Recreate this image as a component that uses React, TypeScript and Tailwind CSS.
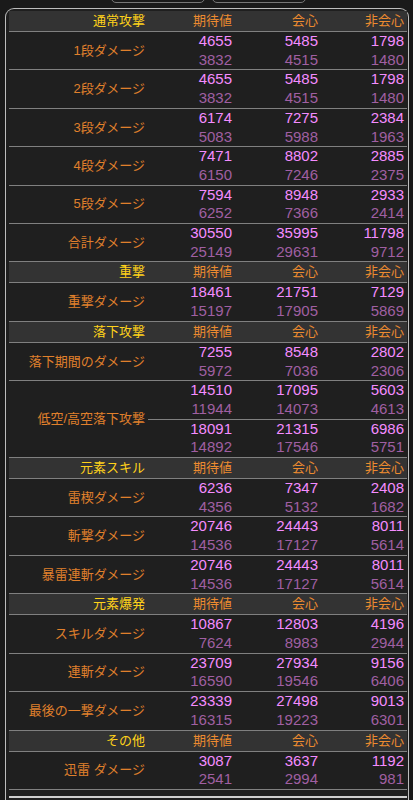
import React from "react"

type Row = { label?: string; span?: number; top: string[]; bottom: string[]; midSplit?: boolean }
type Section = { title: string; rows: Row[] }

const sections: Section[] = [
  {
    title: "通常攻撃",
    rows: [
      { label: "1段ダメージ", top: ["4655", "5485", "1798"], bottom: ["3832", "4515", "1480"] },
      { label: "2段ダメージ", top: ["4655", "5485", "1798"], bottom: ["3832", "4515", "1480"] },
      { label: "3段ダメージ", top: ["6174", "7275", "2384"], bottom: ["5083", "5988", "1963"] },
      { label: "4段ダメージ", top: ["7471", "8802", "2885"], bottom: ["6150", "7246", "2375"] },
      { label: "5段ダメージ", top: ["7594", "8948", "2933"], bottom: ["6252", "7366", "2414"] },
      { label: "合計ダメージ", top: ["30550", "35995", "11798"], bottom: ["25149", "29631", "9712"] },
    ],
  },
  {
    title: "重撃",
    rows: [{ label: "重撃ダメージ", top: ["18461", "21751", "7129"], bottom: ["15197", "17905", "5869"] }],
  },
  {
    title: "落下攻撃",
    rows: [
      { label: "落下期間のダメージ", top: ["7255", "8548", "2802"], bottom: ["5972", "7036", "2306"] },
      { label: "低空/高空落下攻撃", span: 2, top: ["14510", "17095", "5603"], bottom: ["11944", "14073", "4613"] },
      { top: ["18091", "21315", "6986"], bottom: ["14892", "17546", "5751"] },
    ],
  },
  {
    title: "元素スキル",
    rows: [
      { label: "雷楔ダメージ", top: ["6236", "7347", "2408"], bottom: ["4356", "5132", "1682"] },
      { label: "斬撃ダメージ", top: ["20746", "24443", "8011"], bottom: ["14536", "17127", "5614"] },
      { label: "暴雷連斬ダメージ", top: ["20746", "24443", "8011"], bottom: ["14536", "17127", "5614"] },
    ],
  },
  {
    title: "元素爆発",
    rows: [
      { label: "スキルダメージ", top: ["10867", "12803", "4196"], bottom: ["7624", "8983", "2944"] },
      { label: "連斬ダメージ", top: ["23709", "27934", "9156"], bottom: ["16590", "19546", "6406"] },
      { label: "最後の一撃ダメージ", top: ["23339", "27498", "9013"], bottom: ["16315", "19223", "6301"] },
    ],
  },
  {
    title: "その他",
    rows: [{ label: "迅雷 ダメージ", top: ["3087", "3637", "1192"], bottom: ["2541", "2994", "981"] }],
  },
]

const jp = "font-['Liberation_Sans','Noto_Sans_CJK_JP',sans-serif]"

function HeaderRow({ title }: { title: string }) {
  const cell = `h-[20px] p-0 pr-[3px] text-right align-middle text-[13px] leading-[20px] font-normal border-b border-[#808080] bg-[#333333] ${jp}`
  return (
    <tr>
      <th className={`${cell} text-[#ffd21a]`}>{title}</th>
      <th className={`${cell} text-[#ec8b30]`}>期待値</th>
      <th className={`${cell} text-[#ec8b30]`}>会心</th>
      <th className={`${cell} text-[#ec8b30]`}>非会心</th>
    </tr>
  )
}

function DataRow({ row, hasLabelCell }: { row: Row; hasLabelCell: boolean }) {
  const num = "p-0 pr-[3px] text-right align-middle border-b border-[#808080] font-['Liberation_Sans',sans-serif] text-[15px]"
  return (
    <tr>
      {hasLabelCell && (
        <td
          rowSpan={row.span ?? 1}
          className={`p-0 pr-[3px] text-right align-middle text-[13px] leading-[18px] text-[#e0802c] border-b border-[#808080] ${jp}`}
        >
          {row.label}
        </td>
      )}
      {row.top.map((v, i) => (
        <td key={i} className={num}>
          <div className="leading-[18.7px] text-[#f48cff]">{v}</div>
          <div className="leading-[18.7px] text-[#a05fa2]">{row.bottom[i]}</div>
        </td>
      ))}
    </tr>
  )
}

export default function App() {
  return (
    <div className="min-h-[800px] bg-[#1a1a1a]">
      <div className="h-[3px] overflow-hidden flex items-end justify-center gap-[7px] pl-[3px]">
        <div className="w-[94px] h-[30px] shrink-0 rounded-[5px] border border-[#777]" />
        <div className="w-[94px] h-[30px] shrink-0 rounded-[5px] border border-[#777]" />
      </div>
      <div className="mt-[5px] ml-[5px] mr-[4px] rounded-t-[9px] border border-b-0 border-[#bdbdbd] bg-[#1f1f1f] pl-[3px] pr-[1px] pt-[2px]">
        <table className="w-[398px] border-collapse table-fixed">
          <colgroup>
            <col className="w-[139px]" />
            <col className="w-[87px]" />
            <col className="w-[86px]" />
            <col className="w-[86px]" />
          </colgroup>
          <tbody>
            {sections.map((s) => (
              <React.Fragment key={s.title}>
                <HeaderRow title={s.title} />
                {s.rows.map((r, i) => (
                  <DataRow key={i} row={r} hasLabelCell={r.label !== undefined} />
                ))}
              </React.Fragment>
            ))}
          </tbody>
        </table>
        <div className="mt-[6px] h-[20px] border-t-2 border-[#cfcfcf]" />
      </div>
    </div>
  )
}
